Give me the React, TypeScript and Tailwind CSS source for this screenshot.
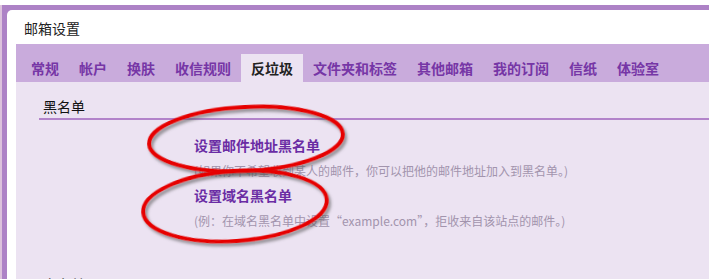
import React from "react";

const tabs = ["常规", "帐户", "换肤", "收信规则", "反垃圾", "文件夹和标签", "其他邮箱", "我的订阅", "信纸", "体验室"];

export default function App() {
  const font = { fontFamily: '"Noto Sans CJK SC", "Microsoft YaHei", sans-serif' };
  return (
    <div className="w-[709px] h-[279px] overflow-hidden bg-white relative" style={font}>
      <div className="h-[5px] bg-white" />
      <div className="h-[274px] bg-[#ad82c6] pt-[5px] pl-[5px] border-l-2 border-[#dcc2dc] flex overflow-hidden">
        <div className="flex-1 bg-white rounded-tl-[5px] pl-[9px] flex flex-col overflow-hidden">
          <div className="shrink-0 h-[34px] flex items-center pl-[8px] pt-[2px] text-[14px] text-[#222] leading-5">邮箱设置</div>
          <div className="shrink-0 h-[38px] bg-[#c9abdc] flex items-end pl-[5px]">
            {tabs.map((t) => (
              <div
                key={t}
                className={
                  "h-[28px] px-[10px] flex items-center text-[14px] font-bold leading-5 " +
                  (t === "反垃圾" ? "bg-[#ece3f2] text-[#222]" : "text-[#7636a6]")
                }
              >
                {t}
              </div>
            ))}
          </div>
          <div className="shrink-0 flex-1 bg-[#ece3f2] relative">
            <div className="ml-[23px] pt-[14px] pl-[4px] pb-[2px] border-b-2 border-[#b283ca] text-[14px] leading-5 text-[#111]">
              黑名单
            </div>
            <div className="ml-[178px] mt-[13px] flex flex-col">
              <div className="h-[25px] flex items-center text-[14px] font-bold text-[#6a2ca4]">设置邮件地址黑名单</div>
              <div className="h-[25px] flex items-center text-[12px] text-[#a294ad]">
                (如果你不希望收到某人的邮件，你可以把他的邮件地址加入到黑名单。)
              </div>
              <div className="h-[25px] flex items-center text-[14px] font-bold text-[#6a2ca4]">设置域名黑名单</div>
              <div className="h-[25px] flex items-center text-[12px] text-[#a294ad]">
                (例：在域名黑名单中设置“example.com”，拒收来自该站点的邮件。)
              </div>
            </div>
            <div className="ml-[27px] mt-[41px] text-[14px] leading-5 text-[#111]">白名单</div>
          </div>
        </div>
      </div>
      <svg className="absolute left-0 top-0 pointer-events-none" width="709" height="279">
        <defs>
          <filter id="sh" x="-20%" y="-30%" width="140%" height="160%">
            <feDropShadow dx="2" dy="3" stdDeviation="1.5" floodColor="#555" floodOpacity="0.6" />
          </filter>
        </defs>
        <ellipse cx="246" cy="139" rx="97" ry="32" fill="none" stroke="#e60000" strokeWidth="4" filter="url(#sh)" transform="rotate(-3 246 139)" />
        <ellipse cx="235" cy="206" rx="92" ry="35" fill="none" stroke="#e60000" strokeWidth="4" filter="url(#sh)" transform="rotate(-4 235 206)" />
      </svg>
    </div>
  );
}
